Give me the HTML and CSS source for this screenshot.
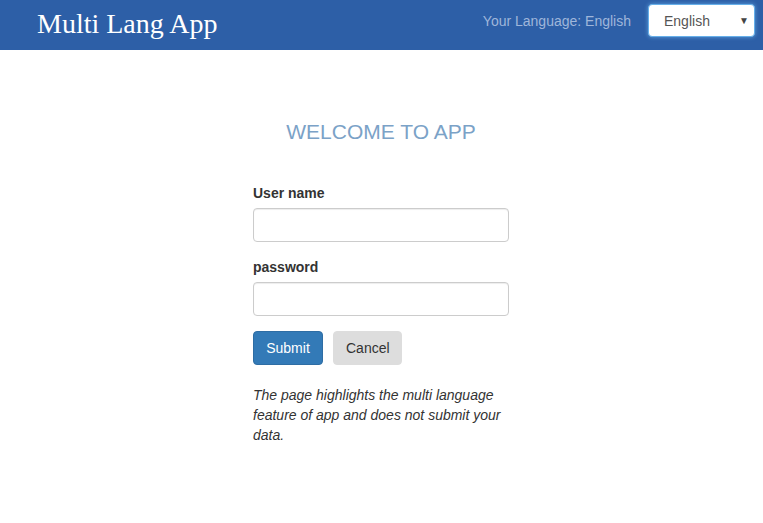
FILE: index.html
```html
<!DOCTYPE html>
<html lang="en">
<head>
<meta charset="utf-8">
<title>Multi Lang App</title>
<link rel="stylesheet" href="styles.css">
</head>
<body>
<header class="navbar">
  <div class="brand">Multi Lang App</div>
  <div class="nav-right">
    <span class="lang-label">Your Language: English</span>
    <div class="lang-select">
      <span class="lang-value">English</span>
      <span class="lang-arrow">&#9660;</span>
    </div>
  </div>
</header>
<main class="content">
  <div class="login">
    <h3 class="welcome">WELCOME TO APP</h3>
    <div class="form-group">
      <label class="label">User name</label>
      <div class="input"></div>
    </div>
    <div class="form-group">
      <label class="label">password</label>
      <div class="input"></div>
    </div>
    <div class="buttons">
      <button class="btn btn-primary">Submit</button>
      <button class="btn btn-default">Cancel</button>
    </div>
    <p class="note">The page highlights the multi language feature of app and does not submit your data.</p>
  </div>
</main>
</body>
</html>
```
FILE: styles.css
```css
* { box-sizing: border-box; }
html, body { margin: 0; padding: 0; }
body {
  font-family: "Liberation Sans", Arial, sans-serif;
  font-size: 14px;
  line-height: 20px;
  color: #333;
  background: #fff;
}
.navbar {
  height: 50px;
  background: #2d5fa7;
  display: flex;
  align-items: flex-start;
  justify-content: space-between;
  padding: 0 8px 0 37px;
}
.brand {
  font-family: "Liberation Serif", "Times New Roman", serif;
  font-size: 28px;
  line-height: 32px;
  color: #fff;
  padding-top: 8px;
}
.nav-right {
  display: flex;
  align-items: center;
  gap: 17px;
  padding-top: 4px;
}
.lang-label {
  color: #9fb6da;
  font-size: 14px;
}
.lang-select {
  width: 107px;
  height: 33px;
  background: #fff;
  border: 1px solid #66afe9;
  border-radius: 4px;
  box-shadow: 0 0 4px rgba(102, 175, 233, 0.8);
  display: flex;
  align-items: center;
  justify-content: space-between;
  padding: 0 5px 0 15px;
  color: #555;
}
.lang-arrow {
  font-size: 10px;
  color: #444;
  line-height: 10px;
}
.content {
  display: flex;
  justify-content: center;
  padding-top: 70px;
}
.login {
  width: 256px;
  margin-left: -1px;
}
.welcome {
  margin: 0 0 40px;
  text-align: center;
  font-weight: normal;
  font-size: 21px;
  line-height: 23px;
  color: #7ba2c7;
}
.form-group { margin-bottom: 15px; }
.label {
  display: block;
  font-weight: bold;
  margin-bottom: 5px;
}
.input {
  height: 34px;
  border: 1px solid #ccc;
  border-radius: 4px;
  box-shadow: inset 0 1px 1px rgba(0,0,0,0.075);
}
.buttons {
  display: flex;
  gap: 10px;
}
.btn {
  font-family: inherit;
  font-size: 14px;
  line-height: 20px;
  height: 34px;
  width: 70px;
  padding: 6px 12px;
  border-radius: 4px;
  border: 1px solid transparent;
}
.btn-primary {
  background: #337ab7;
  border-color: #2e6da4;
  color: #fff;
}
.btn-default {
  background: #ddd;
  border-color: #ddd;
  color: #333;
  width: 69px;
}
.note {
  margin: 20px 0 0;
  font-style: italic;
}
```
